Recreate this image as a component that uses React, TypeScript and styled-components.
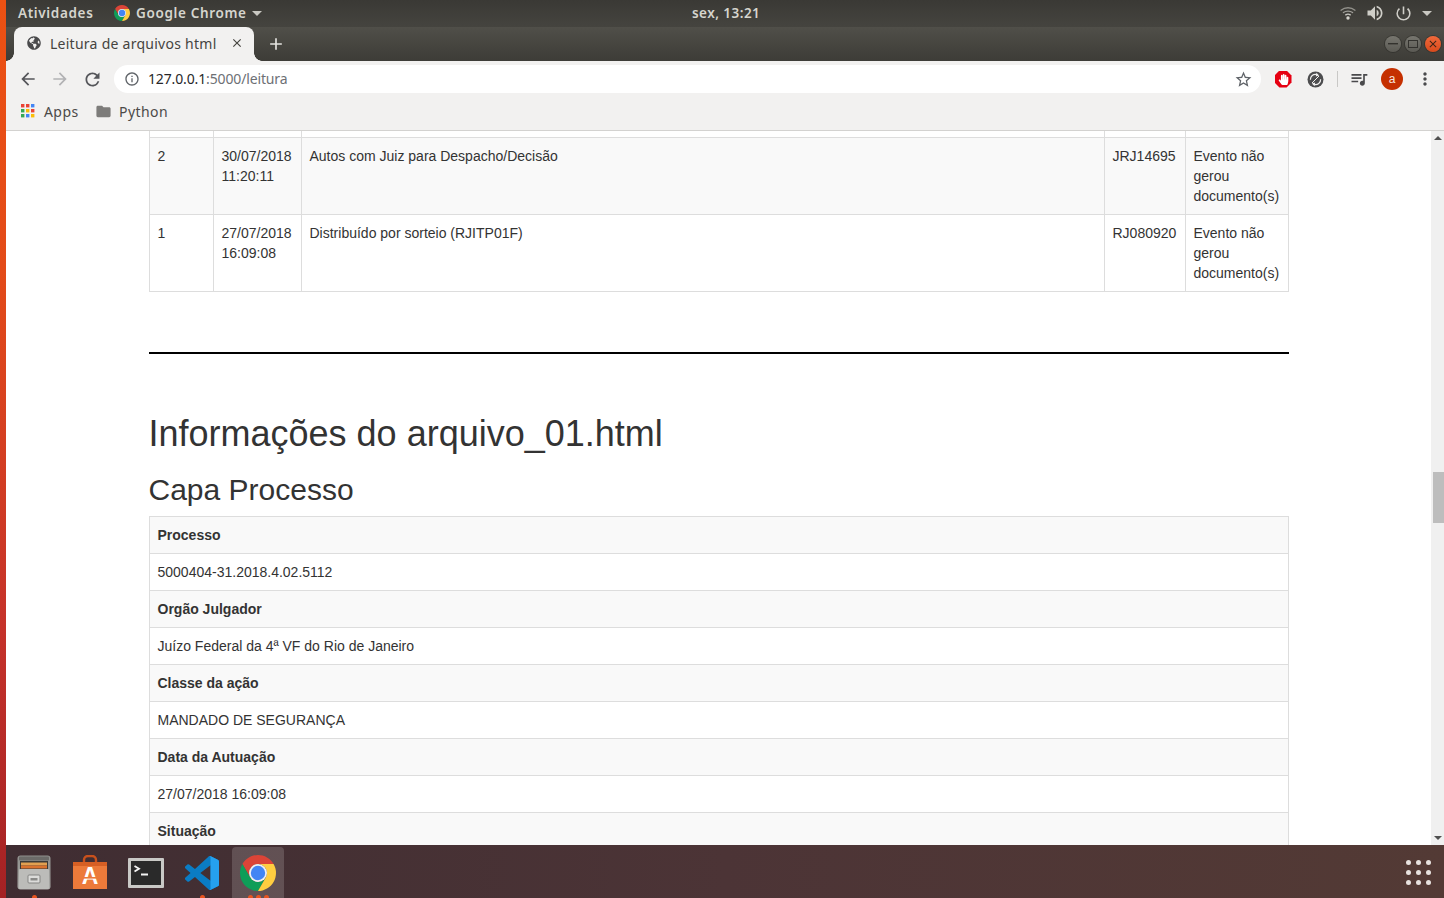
import React from "react";
import styled, { createGlobalStyle } from "styled-components";
import {
  MdAdd,
  MdArrowBack,
  MdArrowForward,
  MdClose,
  MdFolder,
  MdInfoOutline,
  MdMoreVert,
  MdPowerSettingsNew,
  MdQueueMusic,
  MdRefresh,
  MdStarBorder,
  MdVolumeUp,
} from "react-icons/md";
import { FaGlobeAmericas, FaHandPaper } from "react-icons/fa";

const GlobalStyle = createGlobalStyle`
  html, body {
    margin: 0;
    padding: 0;
    overflow: hidden;
    background: #fff;
  }
  * {
    box-sizing: border-box;
  }
`;

const uiFont = `"Noto Sans", "Open Sans", sans-serif`;

const Screen = styled.div`
  display: flex;
  width: 1444px;
  height: 898px;
  overflow: hidden;
`;

const Wallpaper = styled.div`
  width: 6px;
  flex: none;
  background: linear-gradient(180deg, #ec5113 0%, #e34b19 30%, #c5322a 70%, #a42224 100%);
`;

const Desktop = styled.div`
  flex: 1;
  min-width: 0;
  display: flex;
  flex-direction: column;
`;

/* gnome panel */
const Panel = styled.div`
  height: 27px;
  flex: none;
  display: grid;
  grid-template-columns: 1fr auto 1fr;
  align-items: center;
  padding: 0 12px 1px 12px;
  background: linear-gradient(180deg, #3a3935 0%, #45443f 100%);
  color: #d6d5ce;
  font: 600 13.5px ${uiFont};
`;

const PanelLeft = styled.div`
  display: flex;
  align-items: center;
`;

const PanelRight = styled.div`
  display: flex;
  align-items: center;
  justify-content: flex-end;
  gap: 9px;
  color: #cfcec8;
`;

const PanelLabel = styled.span<{ $width: number; $gap?: number; $spacing?: number }>`
  display: inline-block;
  width: ${(p) => p.$width}px;
  margin-left: ${(p) => p.$gap ?? 0}px;
  white-space: nowrap;
  letter-spacing: ${(p) => p.$spacing ?? 0.65}px;
`;

const Caret = styled.span`
  width: 0;
  height: 0;
  border-left: 5px solid transparent;
  border-right: 5px solid transparent;
  border-top: 5px solid #c9c8c2;
`;

/* chrome window */
const TabStrip = styled.div`
  height: 34px;
  flex: none;
  display: flex;
  align-items: flex-end;
  padding-left: 8px;
  background: linear-gradient(180deg, #504f49 0%, #3d3c37 100%);
`;

const Tab = styled.div`
  position: relative;
  width: 240px;
  height: 34px;
  display: flex;
  align-items: center;
  padding: 0 10px 2px 13px;
  background: #f2f1f0;
  border-radius: 8px 8px 0 0;
  color: #45443f;
  font: 400 14px ${uiFont};

  &::before,
  &::after {
    content: "";
    position: absolute;
    bottom: 0;
    width: 8px;
    height: 8px;
  }
  &::before {
    left: -8px;
    background: radial-gradient(circle at 0 0, transparent 7.5px, #f2f1f0 8px);
  }
  &::after {
    right: -8px;
    background: radial-gradient(circle at 100% 0, transparent 7.5px, #f2f1f0 8px);
  }
`;

const TabTitle = styled.span`
  flex: 1;
  margin-left: 9px;
  white-space: nowrap;
  letter-spacing: 0.26px;
`;

const NewTab = styled.div`
  width: 44px;
  height: 34px;
  display: flex;
  align-items: center;
  justify-content: center;
  color: #e4e3df;
`;

const WindowButtons = styled.div`
  margin-left: auto;
  height: 34px;
  display: flex;
  align-items: center;
  gap: 4px;
  padding-right: 3px;
`;

const WindowButton = styled.div<{ $close?: boolean }>`
  width: 16px;
  height: 16px;
  border-radius: 50%;
  display: flex;
  align-items: center;
  justify-content: center;
  background: ${(p) =>
    p.$close
      ? "linear-gradient(180deg, #f0693b, #d84a1c)"
      : "linear-gradient(180deg, #77766f, #5b5a54)"};
  box-shadow: 0 0 0 1px rgba(40, 40, 36, 0.5);
  color: ${(p) => (p.$close ? "#3b2418" : "#33322e")};
`;

const Toolbar = styled.div`
  height: 35px;
  flex: none;
  display: flex;
  align-items: center;
  padding-top: 1px;
  background: #f2f1f0;
`;

const ToolButton = styled.div<{ $width: number; $color?: string }>`
  width: ${(p) => p.$width}px;
  flex: none;
  display: flex;
  align-items: center;
  justify-content: center;
  color: ${(p) => p.$color ?? "#55565a"};
`;

const Omnibox = styled.div`
  width: 1147px;
  height: 28px;
  flex: none;
  display: flex;
  align-items: center;
  padding: 0 8px 0 10px;
  background: #fff;
  border-radius: 14px;
  color: #5f6368;
`;

const Url = styled.span`
  flex: 1;
  margin-left: 8px;
  padding-bottom: 2px;
  font: 400 14px ${uiFont};
  letter-spacing: -0.14px;
  color: #6d7075;
`;

const UrlHost = styled.span`
  color: #27272a;
`;

const ToolSeparator = styled.div`
  width: 1px;
  height: 16px;
  flex: none;
  margin: 0 5px 0 12px;
  background: #c9c8c6;
`;

const Avatar = styled.div`
  width: 22px;
  height: 22px;
  border-radius: 50%;
  display: flex;
  align-items: center;
  justify-content: center;
  background: #c53000;
  color: #f6e3dc;
  font: 400 12px "Liberation Sans", sans-serif;
`;

const Octagon = styled.div`
  width: 17px;
  height: 17px;
  display: flex;
  align-items: center;
  justify-content: center;
  background: #e60012;
  clip-path: polygon(29% 0, 71% 0, 100% 29%, 100% 71%, 71% 100%, 29% 100%, 0 71%, 0 29%);
  color: #fff;
`;

const Bookmarks = styled.div`
  height: 35px;
  flex: none;
  display: flex;
  align-items: center;
  padding: 0 0 4px 15px;
  background: #f2f1f0;
  border-bottom: 1px solid #d3d2d0;
  color: #4b4a48;
  font: 400 14px ${uiFont};
`;

const BookmarkItem = styled.div<{ $gap: number; $width: number }>`
  width: ${(p) => p.$width}px;
  display: flex;
  align-items: center;
  gap: ${(p) => p.$gap}px;
  letter-spacing: 0.42px;
`;

/* page */
const Viewport = styled.div`
  flex: 1;
  min-height: 0;
  display: flex;
`;

const Page = styled.main`
  flex: 1;
  min-width: 0;
  overflow: hidden;
  padding-left: 142.5px;
  background: #fff;
  color: #333;
  font: 14px/20px "Liberation Sans", Arial, sans-serif;
`;

const Container = styled.div`
  width: 1140px;
`;

const Table = styled.table`
  width: 1140px;
  table-layout: fixed;
  border-collapse: collapse;
  border-spacing: 0;
`;

const Cell = styled.td`
  padding: 8px;
  vertical-align: top;
  border: 1px solid #ddd;
`;

const HeaderCell = styled.th`
  padding: 8px;
  text-align: left;
  vertical-align: top;
  border: 1px solid #ddd;
`;

const StubCell = styled.td`
  height: 6px;
  padding: 0;
  border: 1px solid #ddd;
  border-top: 0;
`;

const Row = styled.tr<{ $shaded?: boolean }>`
  background: ${(p) => (p.$shaded ? "#f9f9f9" : "#fff")};
`;

const Divider = styled.hr`
  height: 2px;
  margin: 60px 0 60.4px;
  border: 0;
  background: #000;
`;

const Heading = styled.h1`
  margin: 0 0 20px;
  color: #333;
  font: 500 36px/39.6px "Liberation Sans", Arial, sans-serif;
`;

const SubHeading = styled.h2`
  margin: 0 0 10px;
  color: #333;
  font: 500 30px/33px "Liberation Sans", Arial, sans-serif;
`;

const Scrollbar = styled.div`
  width: 13px;
  flex: none;
  display: flex;
  flex-direction: column;
  align-items: flex-end;
  background: #f0f0f0;
`;

const ScrollArrow = styled.div<{ $down?: boolean }>`
  width: 0;
  height: 0;
  margin: ${(p) => (p.$down ? "auto 2px 5px 0" : "5px 2px 0 0")};
  border-left: 4px solid transparent;
  border-right: 4px solid transparent;
  ${(p) => (p.$down ? "border-top" : "border-bottom")}: 4px solid #505050;
`;

const ScrollThumb = styled.div`
  width: 11px;
  height: 51px;
  margin-top: 332px;
  background: #bdbdbd;
`;

/* ubuntu dock */
const Dock = styled.div`
  height: 53px;
  flex: none;
  display: flex;
  background: linear-gradient(90deg, #3f2d32 0%, #4c3436 50%, #533a35 100%);
`;

const DockItem = styled.div<{ $active?: boolean }>`
  position: relative;
  width: 52px;
  height: 51px;
  margin: 2px 2px 0;
  flex: none;
  display: flex;
  align-items: center;
  justify-content: center;
  border-radius: 4px 4px 0 0;
  background: ${(p) => (p.$active ? "rgba(255, 255, 255, 0.16)" : "transparent")};
`;

const RunDots = styled.div`
  position: absolute;
  left: 0;
  right: 0;
  bottom: -2px;
  display: flex;
  justify-content: center;
  gap: 3px;
`;

const RunDot = styled.span`
  width: 5px;
  height: 5px;
  border-radius: 50%;
  background: #e95420;
`;

const AppGrid = styled.div`
  margin: 15px 13px 0 auto;
  display: grid;
  grid-template-columns: repeat(3, 5px);
  grid-auto-rows: 5px;
  gap: 5px;
  align-self: flex-start;
`;

const GridDot = styled.span`
  border-radius: 50%;
  background: #e8e2df;
`;

function ChromeLogo({ size }: { size: number }) {
  return (
    <svg width={size} height={size} viewBox="4 4 40 40">
      <path d="M6.68 14A20 20 0 0 1 41.32 14H24A10 10 0 0 0 15.34 29Z" fill="#db4437" />
      <path d="M6.68 14A20 20 0 0 0 24 44L32.66 29A10 10 0 0 1 15.34 29Z" fill="#0f9d58" />
      <path d="M41.32 14A20 20 0 0 1 24 44L32.66 29A10 10 0 0 0 24 14Z" fill="#ffcd40" />
      <circle cx="24" cy="24" r="10" fill="#f1f1f1" />
      <circle cx="24" cy="24" r="8" fill="#4285f4" />
    </svg>
  );
}

function WifiIcon() {
  return (
    <svg width="16" height="14" viewBox="0 0 16 14" fill="none" stroke="#c9c8c2" strokeLinecap="round">
      <path d="M1 4.2C5 .9 11 .9 15 4.2" strokeWidth="1.3" opacity="0.6" />
      <path d="M3.4 6.6C6 4.6 10 4.6 12.6 6.6" strokeWidth="1.3" opacity="0.7" />
      <path d="M5.7 8.9C7 8 9 8 10.3 8.9" strokeWidth="1.3" />
      <circle cx="8" cy="12" r="1.7" fill="#d6d5ce" stroke="none" />
    </svg>
  );
}

function AppsIcon() {
  const colors = ["#ea4335", "#ea4335", "#4285f4", "#34a853", "#fbbc05", "#ea4335", "#34a853", "#4285f4", "#fbbc05"];
  return (
    <svg width="14" height="14" viewBox="0 0 14 14">
      {colors.map((c, i) => (
        <rect key={i} x={(i % 3) * 5} y={Math.floor(i / 3) * 5} width="3.4" height="3.4" fill={c} />
      ))}
    </svg>
  );
}

function SyncOffIcon() {
  return (
    <svg width="17" height="17" viewBox="0 0 17 17">
      <circle cx="8.5" cy="8.5" r="8" fill="#4d4d4f" />
      <path d="M3.4 8.8A5 5 0 0 1 9.8 3.6" fill="none" stroke="#f2f1f0" strokeWidth="1.2" />
      <path d="M13.6 8.2A5 5 0 0 1 7.2 13.4" fill="none" stroke="#f2f1f0" strokeWidth="1.2" />
      <path d="M9.4 1.8L12.2 4.4 8.8 5.6ZM7.6 15.2L4.8 12.6 8.2 11.4Z" fill="#f2f1f0" />
      <path d="M5 12L12 5" stroke="#f2f1f0" strokeWidth="1" />
    </svg>
  );
}

function FilesIcon() {
  return (
    <svg width="34" height="35" viewBox="0 0 34 35">
      <defs>
        <linearGradient id="cabinet" x1="0" y1="0" x2="0" y2="1">
          <stop offset="0" stopColor="#8f8f8c" />
          <stop offset="1" stopColor="#a9a9a6" />
        </linearGradient>
      </defs>
      <rect x="0.5" y="0.5" width="33" height="34" rx="3" fill="url(#cabinet)" />
      <rect x="2" y="1.5" width="30" height="4" rx="1" fill="#6b6a68" />
      <rect x="3" y="6" width="28" height="9" fill="#3b3a38" />
      <rect x="4" y="7.5" width="26" height="3" fill="#e2a050" />
      <rect x="4" y="10.5" width="26" height="3" fill="#d9722e" />
      <rect x="2" y="14" width="30" height="20" rx="1" fill="#bcbcb9" />
      <rect x="11" y="20" width="12" height="8" rx="1" fill="#dcdcda" stroke="#858583" />
      <rect x="13.5" y="23" width="7" height="2.5" fill="#8a8a88" />
    </svg>
  );
}

function StoreIcon() {
  return (
    <svg width="34" height="35" viewBox="0 0 34 35">
      <path d="M11 9V5a4 4 0 0 1 4-4h4a4 4 0 0 1 4 4v4" fill="none" stroke="#c9501c" strokeWidth="2.4" />
      <path d="M0 7H34V34H0Z" fill="#ec7a3a" />
      <path d="M0 7H34V11H0Z" fill="#d65f24" />
      <text x="17" y="29" textAnchor="middle" fill="#fff" fontFamily="Liberation Sans" fontWeight="700" fontSize="23">
        A
      </text>
      <rect x="7" y="22" width="20" height="1.6" fill="#ec7a3a" />
    </svg>
  );
}

function TerminalIcon() {
  return (
    <svg width="36" height="30" viewBox="0 0 36 30">
      <rect width="36" height="30" rx="1" fill="#c9c9c6" />
      <rect x="3" y="3" width="30" height="24" fill="#2a2a2a" />
      <path d="M6.5 8L11 10.8 6.5 13.6" fill="none" stroke="#f4f4f4" strokeWidth="1.8" />
      <rect x="13" y="15.5" width="7" height="2" fill="#f4f4f4" />
    </svg>
  );
}

function VsCodeIcon() {
  return (
    <svg width="34" height="34" viewBox="0 0 24 24">
      <path
        d="M23.15 2.587L18.21.21a1.494 1.494 0 0 0-1.705.29l-9.46 8.63-4.12-3.128a.999.999 0 0 0-1.276.057L.327 7.261A1 1 0 0 0 .326 8.74L3.899 12 .326 15.26a1 1 0 0 0 .001 1.479L1.65 17.94a.999.999 0 0 0 1.276.057l4.12-3.128 9.46 8.63a1.492 1.492 0 0 0 1.704.29l4.942-2.377A1.5 1.5 0 0 0 24 20.06V3.939a1.5 1.5 0 0 0-.85-1.352zm-5.146 14.861L10.826 12l7.178-5.448v10.896z"
        fill="#0a7cc4"
      />
      <path
        d="M16.5.5a1.5 1.5 0 0 1 1.7-.29l4.95 2.38A1.5 1.5 0 0 1 24 3.94V20.06a1.5 1.5 0 0 1-.85 1.35l-4.94 2.38a1.49 1.49 0 0 1-1.7-.29c.55.55 1.5.16 1.5-.62V1.12C18 .34 17.05-.05 16.5.5z"
        fill="#25a0ee"
      />
    </svg>
  );
}

const movements = [
  {
    id: "2",
    shaded: true,
    date: "30/07/2018",
    time: "11:20:11",
    text: "Autos com Juiz para Despacho/Decisão",
    user: "JRJ14695",
  },
  {
    id: "1",
    shaded: false,
    date: "27/07/2018",
    time: "16:09:08",
    text: "Distribuído por sorteio (RJITP01F)",
    user: "RJ080920",
  },
];

const capa = [
  ["Processo", "5000404-31.2018.4.02.5112"],
  ["Orgão Julgador", "Juízo Federal da 4ª VF do Rio de Janeiro"],
  ["Classe da ação", "MANDADO DE SEGURANÇA"],
  ["Data da Autuação", "27/07/2018 16:09:08"],
];

const columns = [64, 88, 803, 81, 103.5];

function App() {
  return (
    <Screen>
      <GlobalStyle />
      <Wallpaper />
      <Desktop>
        <Panel>
          <PanelLeft>
            <PanelLabel $width={96}>Atividades</PanelLabel>
            <ChromeLogo size={16} />
            <PanelLabel $width={116} $gap={6}>Google Chrome</PanelLabel>
            <Caret />
          </PanelLeft>
          <PanelLabel $width={68} $gap={2} $spacing={0.45}>sex, 13:21</PanelLabel>
          <PanelRight>
            <WifiIcon />
            <MdVolumeUp size={20} />
            <MdPowerSettingsNew size={19} />
            <Caret />
          </PanelRight>
        </Panel>

        <TabStrip>
          <Tab>
            <FaGlobeAmericas size={14} color="#4a4a4c" />
            <TabTitle>Leitura de arquivos html</TabTitle>
            <MdClose size={14} color="#45443f" />
          </Tab>
          <NewTab>
            <MdAdd size={20} />
          </NewTab>
          <WindowButtons>
            <WindowButton>
              <svg width="10" height="2" viewBox="0 0 10 2">
                <rect width="10" height="1.4" fill="currentColor" />
              </svg>
            </WindowButton>
            <WindowButton>
              <svg width="10" height="8" viewBox="0 0 10 8">
                <rect x="0.5" y="0.5" width="9" height="7" fill="none" stroke="currentColor" />
              </svg>
            </WindowButton>
            <WindowButton $close>
              <MdClose size={12} />
            </WindowButton>
          </WindowButtons>
        </TabStrip>

        <Toolbar>
          <ToolButton $width={44}>
            <MdArrowBack size={20} />
          </ToolButton>
          <ToolButton $width={20} $color="#b2b2b4">
            <MdArrowForward size={20} />
          </ToolButton>
          <ToolButton $width={44}>
            <MdRefresh size={21} />
          </ToolButton>
          <Omnibox>
            <MdInfoOutline size={16} />
            <Url>
              <UrlHost>127.0.0.1</UrlHost>:5000/leitura
            </Url>
            <MdStarBorder size={19} />
          </Omnibox>
          <ToolButton $width={44}>
            <Octagon>
              <FaHandPaper size={11} />
            </Octagon>
          </ToolButton>
          <ToolButton $width={20}>
            <SyncOffIcon />
          </ToolButton>
          <ToolSeparator />
          <ToolButton $width={32} $color="#4a4a4c">
            <MdQueueMusic size={20} />
          </ToolButton>
          <ToolButton $width={34}>
            <Avatar>a</Avatar>
          </ToolButton>
          <ToolButton $width={32} $color="#4a4a4c">
            <MdMoreVert size={20} />
          </ToolButton>
        </Toolbar>

        <Bookmarks>
          <BookmarkItem $gap={9} $width={74}>
            <AppsIcon />
            Apps
          </BookmarkItem>
          <BookmarkItem $gap={7} $width={90}>
            <MdFolder size={17} color="#7d7c7a" />
            Python
          </BookmarkItem>
        </Bookmarks>

        <Viewport>
          <Page>
            <Container>
              <Table>
                <colgroup>
                  {columns.map((w) => (
                    <col key={w} width={w} />
                  ))}
                </colgroup>
                <tbody>
                  <Row>
                    {columns.map((w) => (
                      <StubCell key={w} />
                    ))}
                  </Row>
                  {movements.map((m) => (
                    <Row key={m.id} $shaded={m.shaded}>
                      <Cell>{m.id}</Cell>
                      <Cell>
                        {m.date}
                        <br />
                        {m.time}
                      </Cell>
                      <Cell>{m.text}</Cell>
                      <Cell>{m.user}</Cell>
                      <Cell>Evento não gerou documento(s)</Cell>
                    </Row>
                  ))}
                </tbody>
              </Table>

              <Divider />

              <Heading>Informações do arquivo_01.html</Heading>
              <SubHeading>Capa Processo</SubHeading>

              <Table>
                <tbody>
                  {capa.map(([label, value]) => (
                    <React.Fragment key={label}>
                      <Row $shaded>
                        <HeaderCell>{label}</HeaderCell>
                      </Row>
                      <Row>
                        <Cell>{value}</Cell>
                      </Row>
                    </React.Fragment>
                  ))}
                  <Row $shaded>
                    <HeaderCell>Situação</HeaderCell>
                  </Row>
                </tbody>
              </Table>
            </Container>
          </Page>
          <Scrollbar>
            <ScrollArrow />
            <ScrollThumb />
            <ScrollArrow $down />
          </Scrollbar>
        </Viewport>

        <Dock>
          <DockItem>
            <FilesIcon />
            <RunDots>
              <RunDot />
            </RunDots>
          </DockItem>
          <DockItem>
            <StoreIcon />
          </DockItem>
          <DockItem>
            <TerminalIcon />
          </DockItem>
          <DockItem>
            <VsCodeIcon />
            <RunDots>
              <RunDot />
            </RunDots>
          </DockItem>
          <DockItem $active>
            <ChromeLogo size={36} />
            <RunDots>
              <RunDot />
              <RunDot />
              <RunDot />
            </RunDots>
          </DockItem>
          <AppGrid>
            {Array.from({ length: 9 }, (_, i) => (
              <GridDot key={i} />
            ))}
          </AppGrid>
        </Dock>
      </Desktop>
    </Screen>
  );
}

export default App;
